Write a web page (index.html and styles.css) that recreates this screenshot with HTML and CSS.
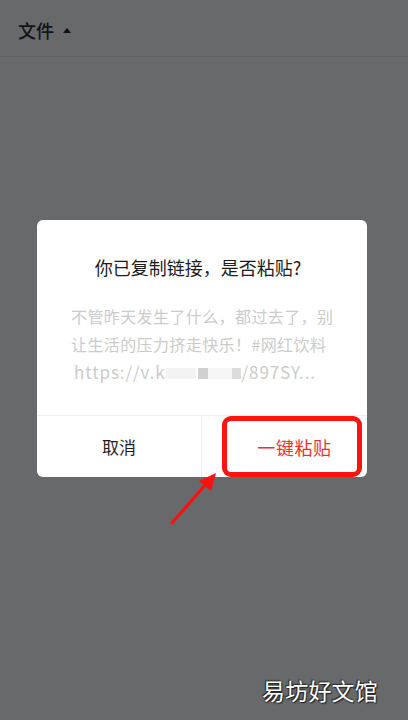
FILE: index.html
```html
<!DOCTYPE html>
<html lang="zh">
<head>
<meta charset="utf-8">
<link rel="stylesheet" href="styles.css">
</head>
<body>
<div class="screen">
  <header class="topbar">
    <span class="topbar-title">文件</span>
    <span class="topbar-caret"></span>
  </header>
  <main class="stage">
    <div class="dialog">
      <div class="dialog-title">你已复制链接，是否粘贴?</div>
      <div class="dialog-body">
        <div class="line">不管昨天发生了什么，都过去了，别</div>
        <div class="line">让生活的压力挤走快乐！#网红饮料</div>
        <div class="line url">https://v.k<span class="blur b1"></span><span class="blur b2"></span><span class="blur b3"></span><span class="blur b4"></span>/897SY...</div>
      </div>
      <div class="dialog-actions">
        <div class="btn btn-cancel">取消</div>
        <div class="btn btn-ok">一键粘贴<span class="highlight"></span></div>
      </div>
    </div>
  </main>
  <svg class="arrow" width="408" height="720" viewBox="0 0 408 720">
    <line x1="172" y1="523" x2="207" y2="483" stroke="#ff1010" stroke-width="3.2" stroke-linecap="round"/>
    <polygon points="216,473 199,481 211,491" fill="#ff1010"/>
  </svg>
  <div class="watermark">易坊好文馆</div>
</div>
</body>
</html>
```
FILE: styles.css
```css
html, body {
  margin: 0;
  padding: 0;
}
body {
  font-family: "Noto Sans CJK SC", "Noto Sans", sans-serif;
  background: #68696b;
}
.screen {
  position: relative;
  width: 408px;
  height: 720px;
  overflow: hidden;
  background: #68696b;
}
.topbar {
  height: 57px;
  border-bottom: 1px solid #616264;
  display: flex;
  align-items: center;
  padding: 3px 0 0 18px;
  box-sizing: border-box;
  gap: 9px;
}
.topbar-title {
  font-size: 18px;
  color: #141414;
  line-height: 24px;
  font-weight: 500;
}
.topbar-caret {
  width: 0;
  height: 0;
  border-left: 4px solid transparent;
  border-right: 4px solid transparent;
  border-bottom: 5px solid #111;
  margin-top: 1px;
}
.stage {
  padding: 163px 0 0 37px;
}
.dialog {
  width: 330px;
  background: #fff;
  border-radius: 6px;
  display: flex;
  flex-direction: column;
}
.dialog-title {
  padding-top: 35px;
  text-align: center;
  font-size: 18px;
  line-height: 24px;
  color: #1c1c1c;
  padding-right: 8px;
}
.dialog-body {
  padding: 24px 0 29px 34px;
  font-size: 16px;
  line-height: 27.7px;
  color: #cbcbcb;
  letter-spacing: 0.4px;
}
.line {
  white-space: nowrap;
}
.url {
  font-size: 17px;
  letter-spacing: 0.9px;
  padding-left: 3px;
}
.blur {
  display: inline-block;
  vertical-align: middle;
  height: 11px;
  margin-top: -3px;
}
.b1 { width: 30px; background: #f3f3f3; }
.b2 { width: 10px; background: #d0d0d0; margin-left: 2px; }
.b3 { width: 24px; background: #f6f6f6; }
.b4 { width: 9px; background: #dcdcdc; margin-right: 1px; }
.dialog-actions {
  display: flex;
  height: 61px;
  border-top: 1px solid #eeeeee;
}
.btn {
  display: flex;
  align-items: center;
  justify-content: center;
  font-size: 18px;
}
.btn-cancel {
  width: 165px;
  border-right: 1px solid #eeeeee;
  color: #1e1e1e;
  font-size: 17px;
  box-sizing: border-box;
}
.btn-ok {
  flex: 1;
  position: relative;
  color: #f0302c;
  padding-left: 20px;
  letter-spacing: 0.6px;
}
.highlight {
  position: absolute;
  left: 20px;
  right: 5px;
  top: 0;
  bottom: 0;
  border: 5px solid #ff1212;
  border-radius: 9px;
}
.arrow {
  position: absolute;
  left: 0;
  top: 0;
  pointer-events: none;
}
.watermark {
  position: absolute;
  left: 262px;
  top: 675px;
  font-size: 23px;
  line-height: 30px;
  color: #fff;
  letter-spacing: 0.2px;
  text-shadow: 0 0 2px #222, 1px 1px 1px #222, -1px -1px 1px #333;
}
```
